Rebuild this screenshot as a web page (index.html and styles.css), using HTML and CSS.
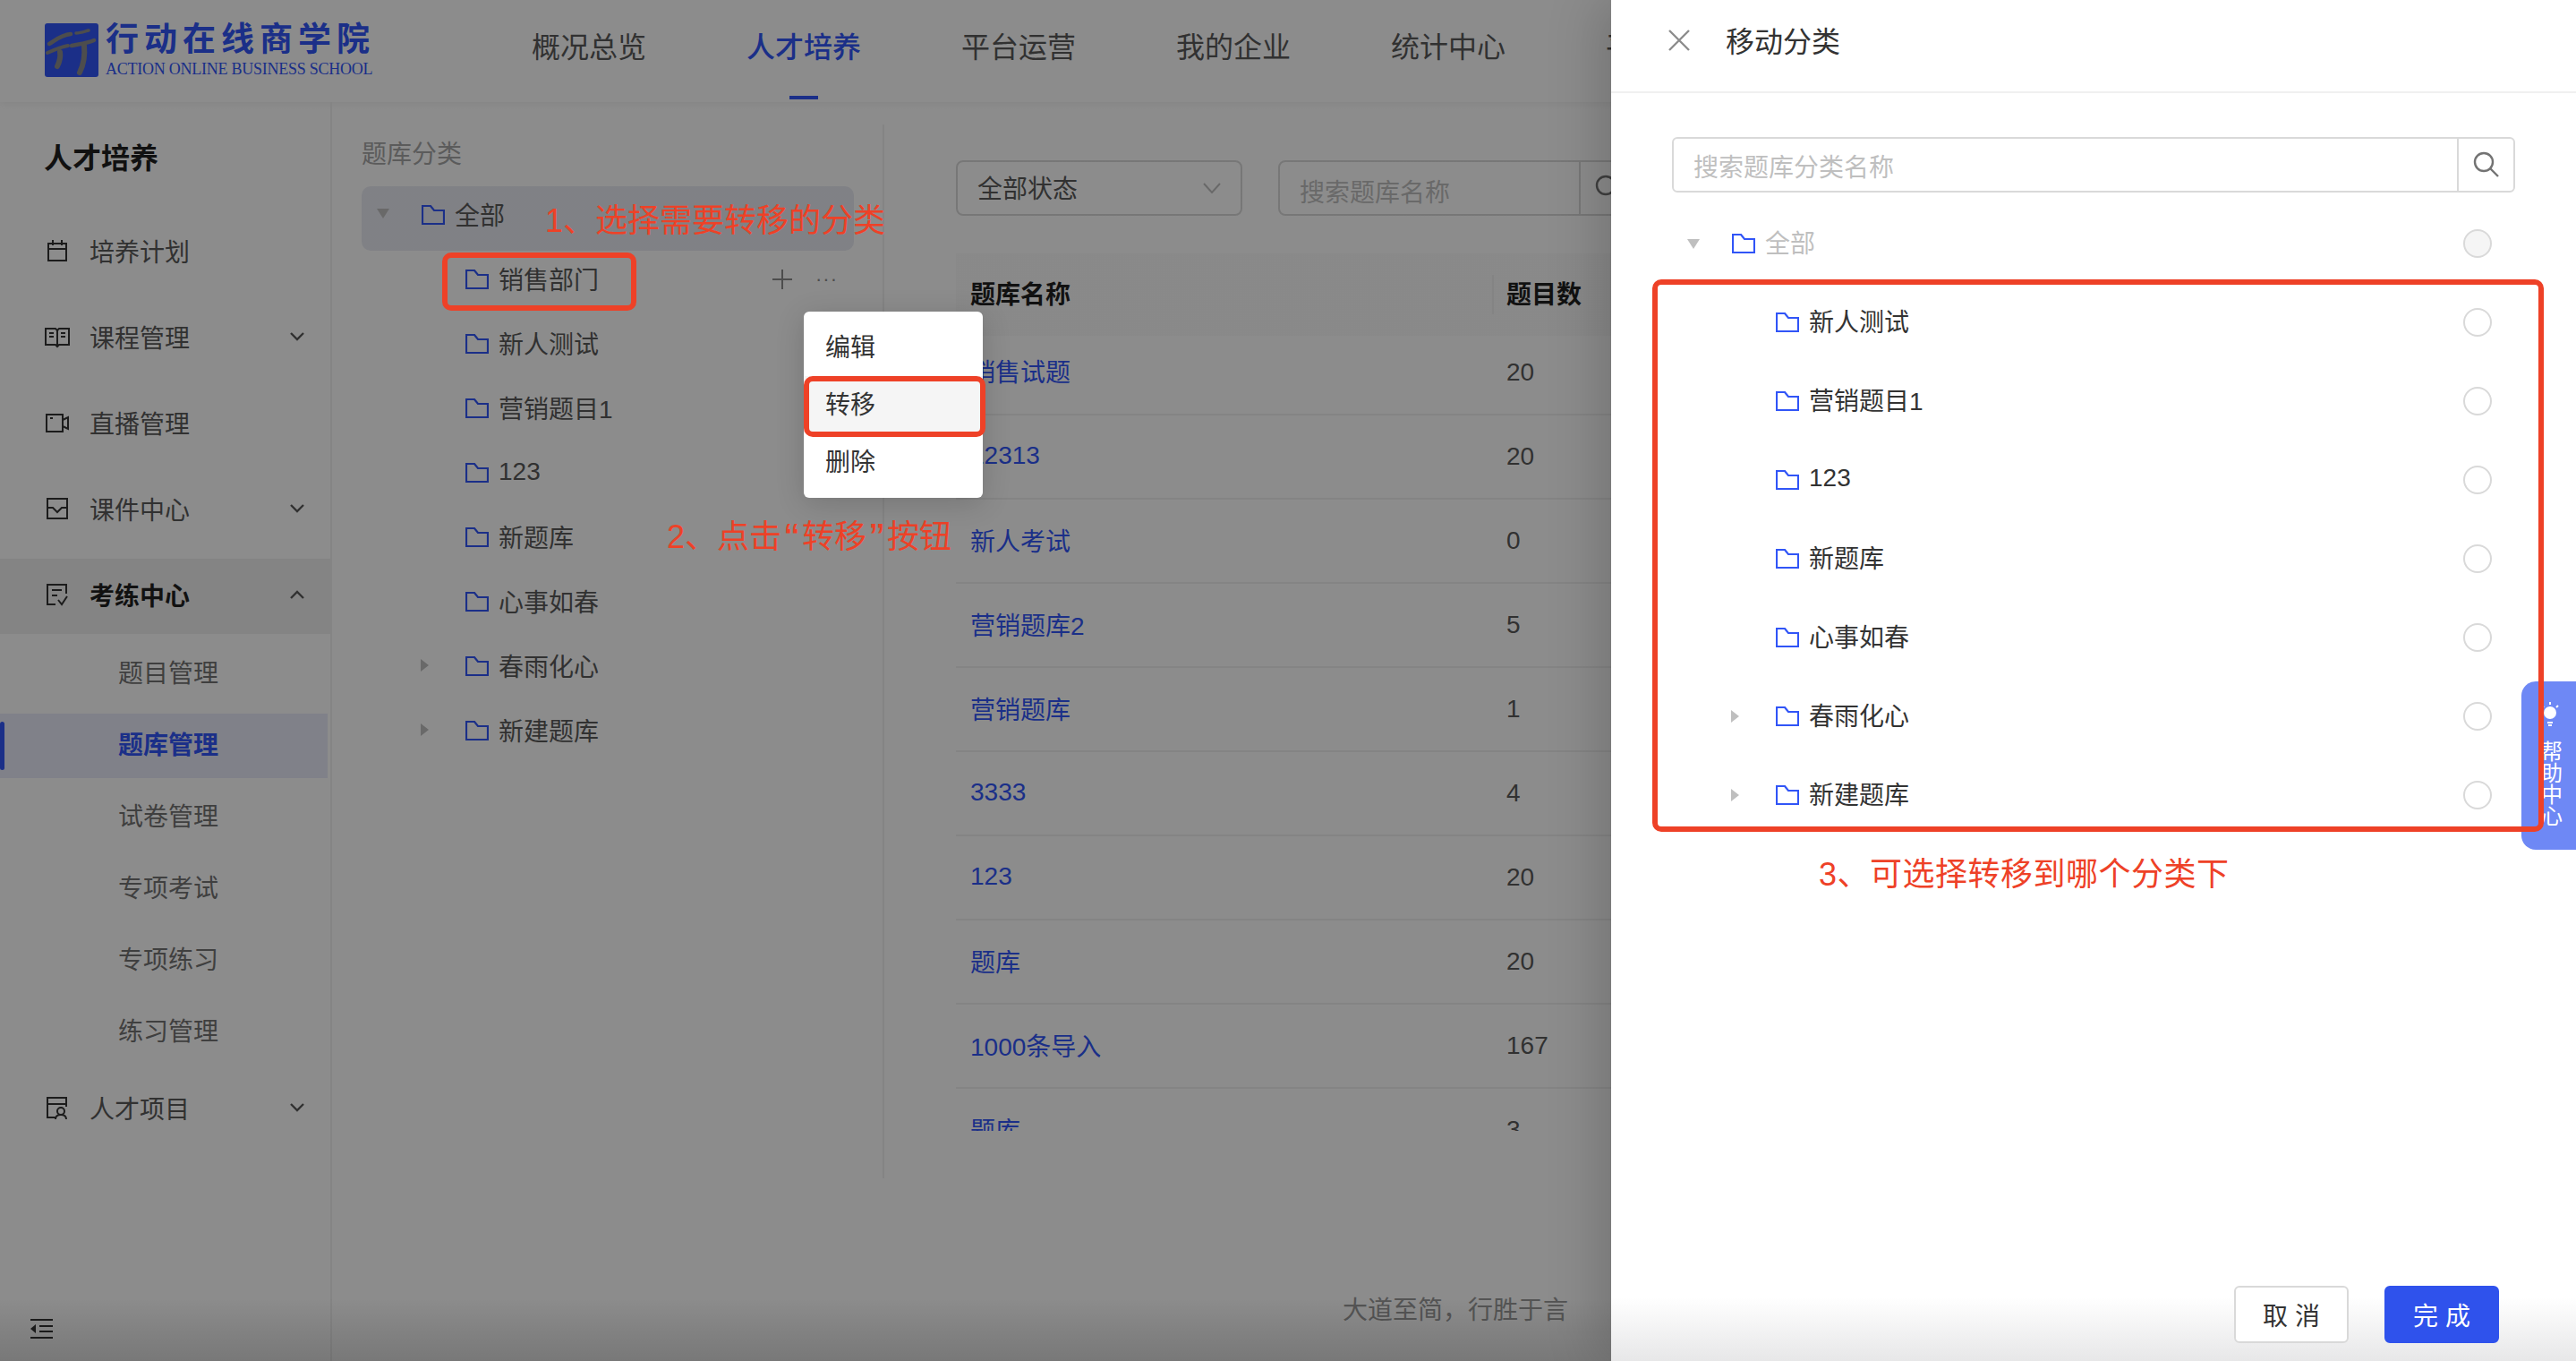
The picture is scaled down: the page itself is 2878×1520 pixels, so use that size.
FILE: index.html
```html
<!DOCTYPE html>
<html lang="zh-CN">
<head>
    <meta charset="UTF-8">
    <title>题库管理</title>
    <link rel="stylesheet" href="styles.css">
</head>
<body>
    <div class="app">
        <header class="topbar">
            <div class="logo">
                <svg class="logo-mark" viewBox="0 0 60 60">
                    <rect width="60" height="60" rx="3" fill="#3155f7"/>
                    <g fill="none" stroke="#8c8c8c" stroke-linecap="round">
                        <path d="M5 23C12 19 18 13 29 12" stroke-width="4.5"/>
                        <path d="M35 11C40 11 45 9 49 8" stroke-width="3.5"/>
                        <path d="M30 25C40 23 48 22 55 19" stroke-width="4.5"/>
                        <path d="M3 33C12 29 20 26 26 25" stroke-width="4"/>
                        <path d="M17 32C18 38 16 44 14 48" stroke-width="6"/>
                        <path d="M44 25C45 35 43 47 39 55" stroke-width="6"/>
                    </g>
                </svg>
                <div class="logo-text">
                    <div class="logo-cn">行动在线商学院</div>
                    <div class="logo-en">ACTION ONLINE BUSINESS SCHOOL</div>
                </div>
            </div>
            <nav class="nav">
                <a class="nav-item">概况总览</a>
                <a class="nav-item active">人才培养</a>
                <a class="nav-item">平台运营</a>
                <a class="nav-item">我的企业</a>
                <a class="nav-item">统计中心</a>
                <a class="nav-item">平台设置</a>
            </nav>
        </header>

        <div class="main">
            <aside class="sidebar">
                <div class="sidebar-title">人才培养</div>
                <div class="menu-item">
                    <svg class="menu-icon" viewBox="0 0 28 28"><path d="M4 6h20v19H4zM4 12h20M9 2v6M19 2v6"/></svg>
                    <span>培养计划</span>
                </div>
                <div class="menu-item">
                    <svg class="menu-icon" viewBox="0 0 28 28"><path d="M1 5h11l2 2 2-2h11v18H16l-2 2-2-2H1zM14 7v18M5 10h5M5 14h5M18 10h5M18 14h5"/></svg>
                    <span>课程管理</span>
                    <svg class="chevron" viewBox="0 0 16 10"><path d="M1 1l7 7 7-7"/></svg>
                </div>
                <div class="menu-item">
                    <svg class="menu-icon" viewBox="0 0 28 28"><path d="M2 5h18v19H2zM20 11l6-3v13l-6-3M6 9h3"/></svg>
                    <span>直播管理</span>
                </div>
                <div class="menu-item">
                    <svg class="menu-icon" viewBox="0 0 28 28"><path d="M3 3h22v22H3zM3 13h6l5 5 5-5h6"/></svg>
                    <span>课件中心</span>
                    <svg class="chevron" viewBox="0 0 16 10"><path d="M1 1l7 7 7-7"/></svg>
                </div>
                <div class="menu-item open">
                    <svg class="menu-icon" viewBox="0 0 28 28"><path d="M24 13V3H3v22h9M8 9h11M8 15h6M15 20l4 5 6-9"/></svg>
                    <span>考练中心</span>
                    <svg class="chevron" viewBox="0 0 16 10"><path d="M1 9l7-7 7 7"/></svg>
                </div>
                <div class="submenu">
                    <div class="submenu-item">题目管理</div>
                    <div class="submenu-item selected">题库管理</div>
                    <div class="submenu-item">试卷管理</div>
                    <div class="submenu-item">专项考试</div>
                    <div class="submenu-item">专项练习</div>
                    <div class="submenu-item">练习管理</div>
                </div>
                <div class="menu-item project">
                    <svg class="menu-icon" viewBox="0 0 28 28"><path d="M12 25H3V3h21v10M3 10h21M18 14a4 4 0 1 1 0 8 4 4 0 0 1 0-8zM12 27c0-4 3-5 6-5s6 1 6 5"/></svg>
                    <span>人才项目</span>
                    <svg class="chevron" viewBox="0 0 16 10"><path d="M1 1l7 7 7-7"/></svg>
                </div>
                <svg class="collapse" viewBox="0 0 26 24"><path d="M1 2h25M11 9h15M11 15h15M1 22h25"/><path class="solid" d="M7 7v10l-6-5z"/></svg>
            </aside>

            <section class="tree-panel">
                <div class="panel-title">题库分类</div>
                <div class="tree-row root current">
                    <i class="caret-down"></i>
                    <svg class="folder" viewBox="0 0 26 22"><path d="M1 1h9l4 5h11v15H1z"/></svg>
                    <span>全部</span>
                </div>
                <div class="tree-row child">
                    <i class="switcher"></i>
                    <svg class="folder" viewBox="0 0 26 22"><path d="M1 1h9l4 5h11v15H1z"/></svg>
                    <span>销售部门</span>
                    <div class="row-actions">
                        <svg class="plus" viewBox="0 0 22 22"><path d="M11 0v22M0 11h22"/></svg>
                        <span class="more">···</span>
                    </div>
                </div>
                <div class="tree-row child">
                    <i class="switcher"></i>
                    <svg class="folder" viewBox="0 0 26 22"><path d="M1 1h9l4 5h11v15H1z"/></svg>
                    <span>新人测试</span>
                </div>
                <div class="tree-row child">
                    <i class="switcher"></i>
                    <svg class="folder" viewBox="0 0 26 22"><path d="M1 1h9l4 5h11v15H1z"/></svg>
                    <span>营销题目1</span>
                </div>
                <div class="tree-row child">
                    <i class="switcher"></i>
                    <svg class="folder" viewBox="0 0 26 22"><path d="M1 1h9l4 5h11v15H1z"/></svg>
                    <span>123</span>
                </div>
                <div class="tree-row child">
                    <i class="switcher"></i>
                    <svg class="folder" viewBox="0 0 26 22"><path d="M1 1h9l4 5h11v15H1z"/></svg>
                    <span>新题库</span>
                </div>
                <div class="tree-row child">
                    <i class="switcher"></i>
                    <svg class="folder" viewBox="0 0 26 22"><path d="M1 1h9l4 5h11v15H1z"/></svg>
                    <span>心事如春</span>
                </div>
                <div class="tree-row child">
                    <i class="switcher"><b class="caret-right"></b></i>
                    <svg class="folder" viewBox="0 0 26 22"><path d="M1 1h9l4 5h11v15H1z"/></svg>
                    <span>春雨化心</span>
                </div>
                <div class="tree-row child">
                    <i class="switcher"><b class="caret-right"></b></i>
                    <svg class="folder" viewBox="0 0 26 22"><path d="M1 1h9l4 5h11v15H1z"/></svg>
                    <span>新建题库</span>
                </div>
            </section>

            <section class="content">
                <div class="filters">
                    <div class="select">
                        <span>全部状态</span>
                        <svg class="select-arrow" viewBox="0 0 20 12"><path d="M1 1l9 10 9-10"/></svg>
                    </div>
                    <div class="search">
                        <span class="search-text">搜索题库名称</span>
                        <div class="search-btn">
                            <svg class="search-icon" viewBox="0 0 30 30"><circle cx="12" cy="12" r="10"/><path d="M19 19l9 9"/></svg>
                        </div>
                    </div>
                </div>
                <div class="table-wrap">
                    <table class="table">
                        <thead>
                            <tr><th class="col-name">题库名称</th><th><span class="th-line"></span>题目数</th></tr>
                        </thead>
                        <tbody>
                            <tr class="first"><td><a>销售试题</a></td><td>20</td></tr>
                            <tr><td><a>12313</a></td><td>20</td></tr>
                            <tr><td><a>新人考试</a></td><td>0</td></tr>
                            <tr><td><a>营销题库2</a></td><td>5</td></tr>
                            <tr><td><a>营销题库</a></td><td>1</td></tr>
                            <tr><td><a>3333</a></td><td>4</td></tr>
                            <tr><td><a>123</a></td><td>20</td></tr>
                            <tr><td><a>题库</a></td><td>20</td></tr>
                            <tr><td><a>1000条导入</a></td><td>167</td></tr>
                            <tr><td><a>题库</a></td><td>3</td></tr>
                        </tbody>
                    </table>
                </div>
                <div class="slogan">大道至简，行胜于言</div>
            </section>
        </div>
    </div>

    <div class="mask"></div>

    <!-- left side callouts -->
    <div class="note-box box-dept"></div>
    <div class="note note-1">1、选择需要转移的分类</div>
    <div class="note note-2">2、点击<span class="quote">“</span>转移<span class="quote">”</span>按钮</div>

    <div class="popover">
        <div class="popover-item">编辑</div>
        <div class="popover-item hover">转移</div>
        <div class="popover-item">删除</div>
    </div>
    <div class="note-box box-move"></div>

    <aside class="drawer">
        <div class="drawer-head">
            <svg class="close" viewBox="0 0 24 24"><path d="M1 1l22 22M23 1L1 23"/></svg>
            <span>移动分类</span>
        </div>
        <div class="drawer-body">
            <div class="drawer-search">
                <span class="drawer-search-text">搜索题库分类名称</span>
                <div class="drawer-search-btn">
                    <svg class="search-icon" viewBox="0 0 30 30"><circle cx="12" cy="12" r="10"/><path d="M19 19l9 9"/></svg>
                </div>
            </div>
            <div class="move-tree">
                <div class="move-row disabled">
                    <i class="caret-down"></i>
                    <svg class="folder" viewBox="0 0 26 22"><path d="M1 1h9l4 5h11v15H1z"/></svg>
                    <span>全部</span>
                    <i class="radio"></i>
                </div>
                <div class="move-row child">
                    <i class="switcher"></i>
                    <svg class="folder" viewBox="0 0 26 22"><path d="M1 1h9l4 5h11v15H1z"/></svg>
                    <span>新人测试</span>
                    <i class="radio"></i>
                </div>
                <div class="move-row child">
                    <i class="switcher"></i>
                    <svg class="folder" viewBox="0 0 26 22"><path d="M1 1h9l4 5h11v15H1z"/></svg>
                    <span>营销题目1</span>
                    <i class="radio"></i>
                </div>
                <div class="move-row child">
                    <i class="switcher"></i>
                    <svg class="folder" viewBox="0 0 26 22"><path d="M1 1h9l4 5h11v15H1z"/></svg>
                    <span>123</span>
                    <i class="radio"></i>
                </div>
                <div class="move-row child">
                    <i class="switcher"></i>
                    <svg class="folder" viewBox="0 0 26 22"><path d="M1 1h9l4 5h11v15H1z"/></svg>
                    <span>新题库</span>
                    <i class="radio"></i>
                </div>
                <div class="move-row child">
                    <i class="switcher"></i>
                    <svg class="folder" viewBox="0 0 26 22"><path d="M1 1h9l4 5h11v15H1z"/></svg>
                    <span>心事如春</span>
                    <i class="radio"></i>
                </div>
                <div class="move-row child">
                    <i class="switcher"><b class="caret-right"></b></i>
                    <svg class="folder" viewBox="0 0 26 22"><path d="M1 1h9l4 5h11v15H1z"/></svg>
                    <span>春雨化心</span>
                    <i class="radio"></i>
                </div>
                <div class="move-row child">
                    <i class="switcher"><b class="caret-right"></b></i>
                    <svg class="folder" viewBox="0 0 26 22"><path d="M1 1h9l4 5h11v15H1z"/></svg>
                    <span>新建题库</span>
                    <i class="radio"></i>
                </div>
            </div>
            <div class="note note-3">3、可选择转移到哪个分类下</div>
        </div>
        <div class="drawer-foot">
            <button class="btn">取 消</button>
            <button class="btn primary">完 成</button>
        </div>
    </aside>

    <div class="help-tab">
        <svg class="help-bulb" viewBox="0 0 24 28">
            <circle cx="12" cy="13" r="7" fill="#fff"/>
            <path d="M9 24h6M10 27h4M12 1v3M3 5l2 2M21 5l-2 2" stroke="#fff" stroke-width="2" fill="none"/>
        </svg>
        <span class="help-text">帮助中心</span>
    </div>
    <div class="note-box box-targets"></div>
</body>
</html>
```

FILE: styles.css
```css
* {
    box-sizing: border-box;
}

body {
    margin: 0;
    width: 2878px;
    height: 1520px;
    overflow: hidden;
    position: relative;
    background-color: #fff;
    font-family: "Liberation Sans", "Noto Sans CJK SC", sans-serif;
    font-size: 28px;
    color: #595959;
}

.app {
    display: flex;
    flex-direction: column;
    height: 100%;
}

/* top bar */
.topbar {
    height: 114px;
    flex-shrink: 0;
    display: flex;
    align-items: center;
    padding-left: 50px;
    box-shadow: 0 2px 8px rgba(0, 0, 0, 0.06);
}

.logo {
    display: flex;
    align-items: center;
    gap: 8px;
    width: 544px;
    margin-top: -2px;
}

.logo-mark {
    width: 60px;
    height: 60px;
}

.logo-cn {
    font-size: 37px;
    line-height: 40px;
    font-weight: 700;
    letter-spacing: 6px;
    color: #3155f7;
    white-space: nowrap;
}

.logo-en {
    font-family: "Liberation Serif", serif;
    font-size: 18px;
    line-height: 20px;
    letter-spacing: -0.25px;
    margin-top: 2px;
    color: #3155f7;
    white-space: nowrap;
}

.nav {
    display: flex;
    gap: 112px;
    height: 100%;
    align-items: center;
    margin-top: -15px;
}

.nav-item {
    font-size: 32px;
    position: relative;
    white-space: nowrap;
    color: #595959;
}

.nav-item.active {
    color: #3155f7;
    font-weight: 500;
}

.nav-item.active::after {
    content: "";
    position: absolute;
    left: 48px;
    bottom: -38px;
    width: 32px;
    height: 4px;
    background-color: #3155f7;
}

.main {
    flex: 1;
    display: flex;
    min-height: 0;
}

/* left menu */
.sidebar {
    width: 371px;
    flex-shrink: 0;
    border-right: 2px solid #f0f0f0;
    position: relative;
}

.sidebar-title {
    font-size: 32px;
    font-weight: 700;
    color: #1f1f1f;
    line-height: 44px;
    padding: 41px 0 41px 49px;
}

.menu-item {
    display: flex;
    align-items: center;
    height: 80px;
    margin-bottom: 16px;
    padding-left: 50px;
}

.menu-item span {
    margin-left: 22px;
}

.menu-icon {
    width: 28px;
    height: 28px;
    fill: none;
    stroke: #333;
    stroke-width: 2;
}

.chevron {
    position: absolute;
    left: 324px;
    width: 16px;
    height: 10px;
    fill: none;
    stroke: #595959;
    stroke-width: 2.4;
}

.menu-item.open {
    background-color: #f0f0f0;
    font-weight: 700;
    color: #1f1f1f;
    height: 84px;
    margin-top: 2px;
    margin-bottom: 0;
    padding-bottom: 5px;
}

.submenu {
    padding-top: 9px;
}

.submenu-item {
    height: 72px;
    line-height: 72px;
    margin-bottom: 8px;
    padding-left: 132px;
    color: #737373;
    position: relative;
}

.submenu-item.selected {
    background-color: #e9ebf9;
    color: #3155f7;
    font-weight: 700;
    margin-right: 3px;
}

.submenu-item.selected::before {
    content: "";
    position: absolute;
    left: 0;
    top: 9px;
    width: 5px;
    height: 54px;
    border-radius: 3px;
    background-color: #3155f7;
}

.menu-item.project {
    margin-top: 7px;
}

.collapse {
    position: absolute;
    left: 33px;
    bottom: 24px;
    width: 26px;
    height: 24px;
    fill: none;
    stroke: #333;
    stroke-width: 2.2;
}

.collapse .solid {
    fill: #333;
    stroke: none;
}

/* category tree */
.tree-panel {
    width: 617px;
    height: 1177px;
    margin-top: 25px;
    flex-shrink: 0;
    padding: 14px 33px 0;
    border-right: 2px solid #f0f0f0;
}

.panel-title {
    line-height: 40px;
    color: #a6a6a6;
    margin-bottom: 15px;
}

.tree-row {
    display: flex;
    align-items: center;
    width: 550px;
    height: 72px;
    padding-bottom: 11px;
    position: relative;
    white-space: nowrap;
}

.tree-row .folder {
    margin-top: 2px;
}

.tree-row.root {
    padding-left: 17px;
}

.tree-row.child {
    padding-left: 66px;
}

.tree-row.current {
    background-color: #e9ebf3;
    border-radius: 10px;
}

.caret-down {
    width: 0;
    height: 0;
    flex-shrink: 0;
    margin-right: 36px;
    border-left: 7px solid transparent;
    border-right: 7px solid transparent;
    border-top: 11px solid #bfbfbf;
}

.switcher {
    width: 50px;
    flex-shrink: 0;
    display: block;
}

.caret-right {
    display: block;
    width: 0;
    height: 0;
    border-top: 7px solid transparent;
    border-bottom: 7px solid transparent;
    border-left: 9px solid #bfbfbf;
}

.folder {
    width: 26px;
    height: 22px;
    flex-shrink: 0;
    margin-right: 11px;
    fill: none;
    stroke: #3155f7;
    stroke-width: 2.2;
}

.row-actions {
    position: absolute;
    left: 459px;
    top: 0;
    height: 64px;
    display: flex;
    align-items: center;
    gap: 26px;
}

.plus {
    width: 22px;
    height: 22px;
    fill: none;
    stroke: #8c8c8c;
    stroke-width: 2;
}

.more {
    font-size: 22px;
    color: #8c8c8c;
    letter-spacing: 1px;
}

/* table area */
.content {
    flex: 1;
    min-width: 0;
    padding: 65px 0 0 80px;
    position: relative;
}

.filters {
    display: flex;
    gap: 40px;
}

.select {
    width: 320px;
    height: 62px;
    border: 2px solid #d9d9d9;
    border-radius: 8px;
    display: flex;
    align-items: center;
    justify-content: space-between;
    padding: 0 22px;
}

.select > span {
    margin-top: -2px;
}

.select-arrow {
    width: 20px;
    height: 12px;
    fill: none;
    stroke: #bfbfbf;
    stroke-width: 2;
}

.search {
    width: 420px;
    height: 62px;
    border: 2px solid #d9d9d9;
    border-radius: 8px;
    display: flex;
    align-items: center;
    padding-left: 22px;
}

.search-text {
    width: 312px;
    margin-top: 6px;
    color: #bfbfbf;
}

.search-btn {
    flex: 1;
    height: 100%;
    border-left: 2px solid #d9d9d9;
    padding: 14px 0 0 16px;
}

.search-icon {
    width: 30px;
    height: 30px;
    fill: none;
    stroke: #737373;
    stroke-width: 2.4;
}

.table-wrap {
    height: 980px;
    margin-top: 42px;
    overflow: hidden;
}

.table {
    width: 1100px;
    border-collapse: collapse;
}

.table th {
    height: 92px;
    background-color: #fafafa;
    text-align: left;
    padding: 0 0 5px 16px;
    color: #1f1f1f;
    position: relative;
}

.table .col-name {
    width: 599px;
}

.th-line {
    position: absolute;
    left: 0;
    top: 24px;
    height: 44px;
    width: 2px;
    background-color: #f0f0f0;
}

.table td {
    height: 94px;
    padding: 0 0 0 16px;
    border-bottom: 2px solid #f0f0f0;
}

.table td:first-child {
    padding-bottom: 3px;
}

.table tr.first td {
    height: 88px;
    padding-bottom: 6px;
}

.table tr.first td:first-child {
    padding-bottom: 9px;
}

.table a {
    color: #3155f7;
}

.slogan {
    position: absolute;
    left: 512px;
    top: 1330px;
    line-height: 40px;
    color: #999;
    white-space: nowrap;
}

.mask {
    position: absolute;
    inset: 0;
    background: linear-gradient(to bottom, rgba(0, 0, 0, 0.45) calc(100% - 70px), rgba(0, 0, 0, 0.53));
}

/* callouts */
.note {
    position: absolute;
    font-size: 36px;
    line-height: 50px;
    color: #ee4127;
    white-space: nowrap;
}

.note-1 {
    left: 609px;
    top: 222px;
}

.note-2 {
    left: 745px;
    top: 575px;
}

.quote {
    display: inline-block;
    width: 23px;
    height: 36px;
    line-height: 36px;
    font-size: 48px;
    text-align: center;
    vertical-align: -6px;
}

.note-3 {
    left: 232px;
    top: 848px;
    letter-spacing: 0.5px;
}

.note-box {
    position: absolute;
    border: 6px solid #ee4127;
    border-radius: 10px;
}

.box-dept {
    left: 494px;
    top: 282px;
    width: 217px;
    height: 65px;
}

.box-move {
    left: 898px;
    top: 420px;
    width: 203px;
    height: 68px;
}

.box-targets {
    left: 1846px;
    top: 312px;
    width: 996px;
    height: 617px;
}

/* row menu */
.popover {
    position: absolute;
    left: 898px;
    top: 348px;
    width: 200px;
    height: 208px;
    padding: 8px 0;
    background-color: #fff;
    border-radius: 6px;
    box-shadow: 0 6px 32px rgba(0, 0, 0, 0.16);
    color: #333;
}

.popover-item {
    height: 64px;
    line-height: 66px;
    padding-left: 24px;
}

.popover-item.hover {
    background-color: #f5f5f5;
}

/* move drawer */
.drawer {
    position: absolute;
    left: 1800px;
    top: 0;
    width: 1078px;
    height: 100%;
    background-color: #fff;
    box-shadow: -12px 0 56px rgba(0, 0, 0, 0.18);
    display: flex;
    flex-direction: column;
    color: #333;
}

.drawer-head {
    height: 104px;
    flex-shrink: 0;
    display: flex;
    align-items: center;
    gap: 40px;
    padding: 0 0 12px 64px;
    border-bottom: 2px solid #f0f0f0;
    font-size: 32px;
}

.drawer-head span {
    margin-top: -2px;
}

.close {
    width: 24px;
    height: 24px;
    fill: none;
    stroke: #8c8c8c;
    stroke-width: 2.4;
}

.drawer-body {
    flex: 1;
    padding: 49px 68px 0 68px;
    position: relative;
}

.drawer-search {
    height: 62px;
    border: 2px solid #d9d9d9;
    border-radius: 6px;
    display: flex;
    align-items: center;
    justify-content: space-between;
    padding-left: 22px;
}

.drawer-search-text {
    color: #bfbfbf;
    margin-top: 2px;
}

.drawer-search-btn {
    width: 63px;
    height: 100%;
    border-left: 2px solid #d9d9d9;
    padding: 14px 0 0 16px;
}

.move-tree {
    margin-top: 13px;
}

.move-row {
    display: flex;
    align-items: center;
    height: 88px;
    padding-left: 17px;
    white-space: nowrap;
}

.move-row span {
    margin-top: -4px;
}

.move-row.child {
    padding-left: 66px;
}

.move-row .folder {
    margin-right: 11px;
}

.move-row.disabled {
    color: #bfbfbf;
}

.radio {
    width: 32px;
    height: 32px;
    margin-left: auto;
    margin-right: 26px;
    border: 2px solid #d9d9d9;
    border-radius: 50%;
}

.disabled .radio {
    background-color: #f5f5f5;
}

.drawer-foot {
    flex-shrink: 0;
    height: 84px;
    display: flex;
    justify-content: flex-end;
    gap: 40px;
    padding-right: 86px;
    background: linear-gradient(to bottom, #fff 15%, #e7e7e8 100%);
}

.btn {
    width: 128px;
    height: 64px;
    border: 2px solid #d9d9d9;
    border-radius: 6px;
    background-color: #fff;
    font-family: inherit;
    font-size: 28px;
    color: #333;
    padding: 0;
}

.btn.primary {
    background-color: #2f52ec;
    border-color: #2f52ec;
    color: #fff;
}

/* help tab */
.help-tab {
    position: absolute;
    left: 2817px;
    top: 761px;
    width: 61px;
    height: 188px;
    background-color: #6e88f5;
    border-radius: 16px 0 0 16px;
    display: flex;
    flex-direction: column;
    align-items: center;
    padding: 22px 0 0 2px;
    color: #fff;
}

.help-bulb {
    width: 24px;
    height: 28px;
}

.help-text {
    writing-mode: vertical-rl;
    font-size: 24px;
    line-height: 24px;
    margin-top: 16px;
}
```
